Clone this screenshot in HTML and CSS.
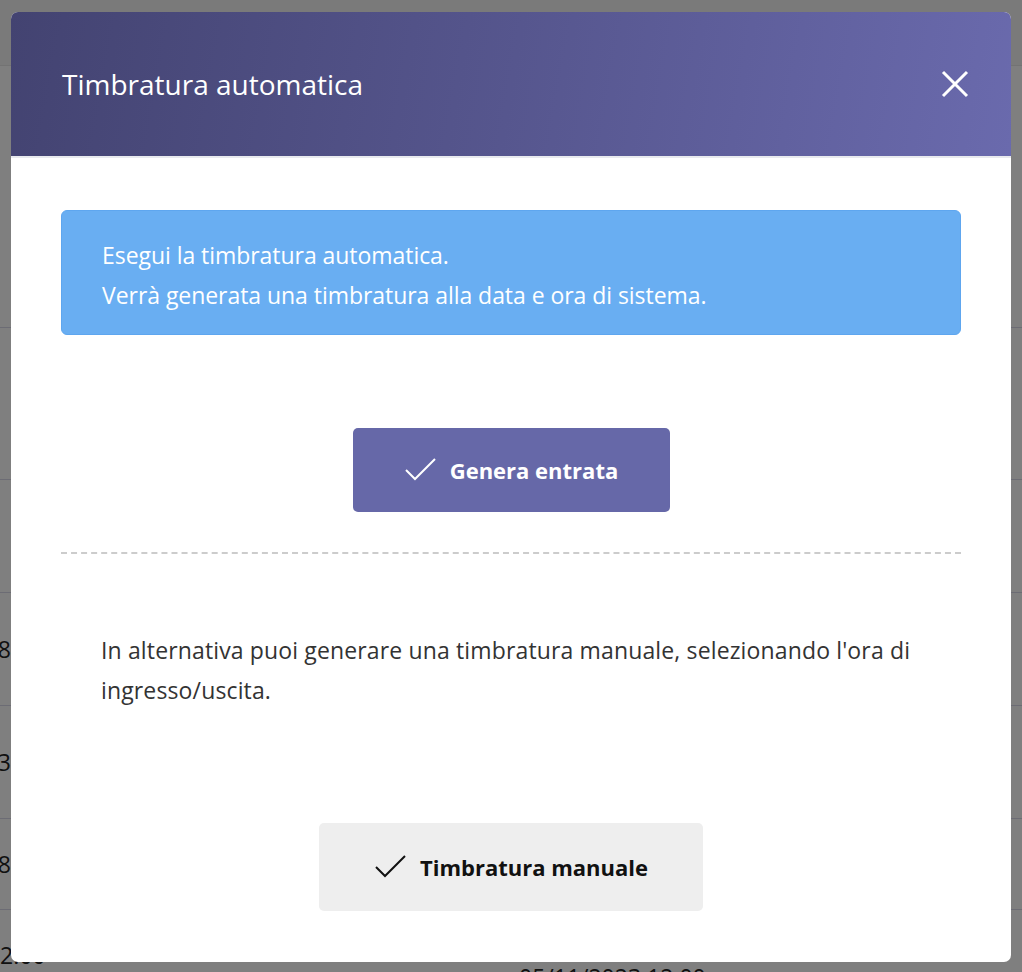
FILE: index.html
```html
<!DOCTYPE html>
<html lang="it">

<head>
    <meta charset="UTF-8">
    <title>Timbrature</title>
    <link rel="stylesheet" href="styles.css">
</head>

<body>
    <div class="page">
        <div class="topbar"></div>
        <div class="row row-tall"></div>
        <div class="row row-mid"></div>
        <div class="row"></div>
        <div class="row"><span class="num">8</span></div>
        <div class="row"><span class="num">3</span></div>
        <div class="row row-short"><span class="num">8</span></div>
        <div class="row row-last"><span class="num">2.00</span><span class="date">05/11/2023 12:00</span></div>
    </div>

    <div class="backdrop">
        <div class="modal">
            <div class="modal-header">
                <h2>Timbratura automatica</h2>
                <button class="close" aria-label="Chiudi">
                    <svg width="28" height="28" viewBox="0 0 28 28">
                        <path d="M2 2 L26 26 M26 2 L2 26" stroke="#fff" stroke-width="3" fill="none" />
                    </svg>
                </button>
            </div>
            <div class="modal-body">
                <div class="alert">
                    Esegui la timbratura automatica.<br>
                    Verrà generata una timbratura alla data e ora di sistema.
                </div>
                <div class="actions">
                    <button class="btn btn-primary">
                        <svg width="32" height="24" viewBox="0 0 32 24">
                            <polyline points="2,12 11,21 31,1" stroke="currentColor" stroke-width="2" fill="none" />
                        </svg>
                        Genera entrata
                    </button>
                </div>
                <hr class="divider">
                <p class="note">In alternativa puoi generare una timbratura manuale, selezionando l'ora di ingresso/uscita.</p>
                <div class="actions">
                    <button class="btn btn-light">
                        <svg width="32" height="24" viewBox="0 0 32 24">
                            <polyline points="2,12 11,21 31,1" stroke="currentColor" stroke-width="2" fill="none" />
                        </svg>
                        Timbratura manuale
                    </button>
                </div>
            </div>
        </div>
    </div>
</body>

</html>
```

FILE: styles.css
```css
body {
    margin: 0;
    font-family: "Open Sans", "Noto Sans", sans-serif;
    color: #222;
    background-color: #fff;
}

.page {
    height: 972px;
    overflow: hidden;
}

.topbar {
    height: 65px;
    background-color: #f4f4f4;
    border-bottom: 1px solid #e6e6e6;
}

.row {
    height: 112px;
    border-bottom: 1px solid #d8d8e8;
    display: flex;
    align-items: center;
    font-size: 23px;
}

.row-tall {
    height: 261px;
}

.row-mid {
    height: 151px;
}

.row-short {
    height: 90px;
}

.row-last {
    height: 63px;
    align-items: flex-start;
    padding-top: 29px;
}

.num {
    width: 11px;
    overflow: hidden;
    white-space: nowrap;
    direction: rtl;
}

.row-last .num {
    direction: ltr;
    width: 60px;
}

.date {
    margin-left: 459px;
    margin-top: 22px;
}

.backdrop {
    position: fixed;
    inset: 0;
    background-color: rgba(0, 0, 0, 0.5);
    display: flex;
    justify-content: center;
    padding-top: 12px;
}

.modal {
    width: 1000px;
    height: 950px;
    background-color: #fff;
    border-radius: 7px;
    overflow: hidden;
}

.modal-header {
    height: 144px;
    display: flex;
    align-items: center;
    justify-content: space-between;
    padding: 0 42px 0 51px;
    background: linear-gradient(100deg, #434371 0%, #56568e 50%, #6a6aad 100%);
    border-bottom: 2px solid #e8eaee;
}

.modal-header h2 {
    margin: 0;
    color: #fff;
    font-size: 28px;
    font-weight: 400;
}

.close {
    background: none;
    border: none;
    padding: 0;
    cursor: pointer;
    display: flex;
}

.modal-body {
    padding: 52px 50px 0;
}

.alert {
    background-color: #69aef2;
    border: 1px solid #5ea6ef;
    border-radius: 6px;
    color: #fff;
    font-size: 23px;
    letter-spacing: -0.05px;
    line-height: 40px;
    padding: 24px 40px 19px;
}

.actions {
    display: flex;
    justify-content: center;
}

.btn {
    display: flex;
    align-items: center;
    justify-content: center;
    gap: 14px;
    border: none;
    border-radius: 5px;
    font-family: inherit;
    font-size: 22px;
    font-weight: 700;
    cursor: pointer;
}

.btn-primary {
    margin-top: 93px;
    width: 317px;
    height: 84px;
    background-color: #6668a8;
    color: #fff;
}

.btn-light {
    margin-top: 113px;
    width: 384px;
    height: 88px;
    background-color: #eeeeee;
    color: #111;
}

.divider {
    margin: 40px 0 0;
    border: none;
    border-top: 2px dashed #cccccc;
}

.note {
    margin: 76px 0 0;
    padding: 0 40px;
    font-size: 23px;
    letter-spacing: 0.14px;
    line-height: 40px;
    color: #333;
}
```
